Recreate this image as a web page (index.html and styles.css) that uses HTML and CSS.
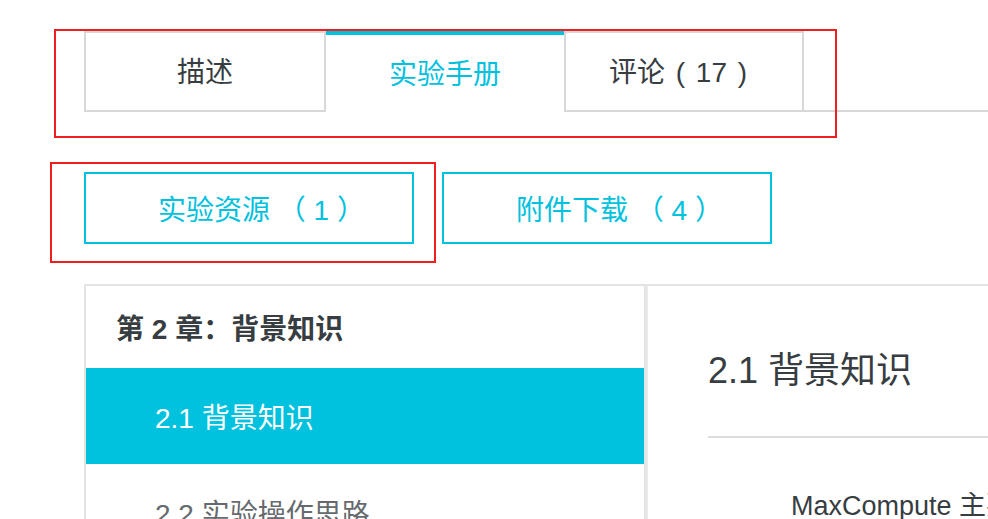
FILE: index.html
```html
<!DOCTYPE html>
<html lang="zh-CN">
<head>
<meta charset="utf-8">
<title>实验手册</title>
<link rel="stylesheet" href="styles.css">
</head>
<body>
<div class="page">
  <div class="tabbar">
    <div class="tab tab-first">描述</div>
    <div class="tab tab-active">实验手册</div>
    <div class="tab tab-last">评论 ( 17 )</div>
  </div>

  <div class="btnrow">
    <div class="btn">实验资源 （ 1 ）</div>
    <div class="btn">附件下载 （ 4 ）</div>
  </div>

  <div class="panel">
    <div class="sidebar">
      <div class="chapter">第 2 章：背景知识</div>
      <div class="item item-active">2.1 背景知识</div>
      <div class="item">2.2 实验操作思路</div>
    </div>
    <div class="content">
      <h2 class="title">2.1 背景知识</h2>
      <div class="rule"></div>
      <p class="para">MaxCompute 主要服务于批量结构化数据的存储和计算，可以提供海量数据仓库的解决方案。</p>
    </div>
  </div>

  <div class="mark mark-tabs"></div>
  <div class="mark mark-btn"></div>
</div>
</body>
</html>
```

FILE: styles.css
```css
html, body {
  margin: 0;
  padding: 0;
  background: #ffffff;
}
body {
  width: 988px;
  height: 519px;
  overflow: hidden;
  font-family: "Liberation Sans", "Noto Sans CJK SC", sans-serif;
  color: #373d41;
}
.page {
  position: relative;
  padding: 31px 0 0 84px;
}

/* tabs */
.tabbar {
  display: flex;
  height: 79px;
  border-bottom: 2px solid #d8d8d8;
}
.tab {
  box-sizing: border-box;
  height: 79px;
  display: flex;
  align-items: center;
  justify-content: center;
  font-size: 28px;
  color: #373d41;
  border: 2px solid #d8d8d8;
  border-bottom: none;
  background: #fff;
  padding-bottom: 3px;
}
.tab-first { width: 242px; }
.tab-active {
  width: 238px;
  height: 81px;
  margin-bottom: -2px;
  border: none;
  border-top: 4px solid #00c1de;
  color: #00c1de;
  padding-bottom: 4px;
}
.tab-last {
  width: 240px;
  word-spacing: 3px;
  padding-right: 12px;
}

/* buttons */
.btnrow {
  display: flex;
  gap: 28px;
  margin-top: 60px;
}
.btn {
  box-sizing: border-box;
  width: 330px;
  height: 72px;
  border: 2px solid #00c1de;
  color: #00c1de;
  font-size: 28px;
  display: flex;
  align-items: center;
  justify-content: center;
  padding-left: 25px;
}

/* panel */
.panel {
  display: flex;
  margin-top: 40px;
  height: 300px;
}
.sidebar {
  box-sizing: border-box;
  width: 562px;
  flex: none;
  border: 2px solid #e3e3e3;
  border-bottom: none;
}
.chapter {
  height: 82px;
  display: flex;
  align-items: center;
  padding-left: 30px;
  font-size: 28px;
  font-weight: bold;
  color: #373d41;
}
.item {
  height: 96px;
  display: flex;
  align-items: center;
  padding-left: 69px;
  font-size: 28px;
  color: #666a6e;
}
.item-active {
  background: #00c1de;
  color: #ffffff;
}
.content {
  flex: 1;
  border-top: 2px solid #e3e3e3;
  border-left: 2px solid #e9e9e9;
  padding-left: 60px;
  min-width: 0;
}
.title {
  box-sizing: border-box;
  margin: 0;
  height: 150px;
  padding-top: 11px;
  display: flex;
  align-items: center;
  font-size: 36px;
  font-weight: normal;
  color: #373d41;
  white-space: nowrap;
}
.rule {
  height: 2px;
  background: #dcdcdc;
}
.para {
  margin: 46px 0 0 0;
  padding-left: 83px;
  font-size: 27px;
  color: #373d41;
  white-space: nowrap;
}

/* red annotation outlines */
.mark {
  position: absolute;
  box-sizing: border-box;
  border: 2px solid #f01e1e;
  pointer-events: none;
}
.mark-tabs {
  left: 54px;
  top: 29px;
  width: 783px;
  height: 109px;
}
.mark-btn {
  left: 50px;
  top: 162px;
  width: 386px;
  height: 101px;
}
```
